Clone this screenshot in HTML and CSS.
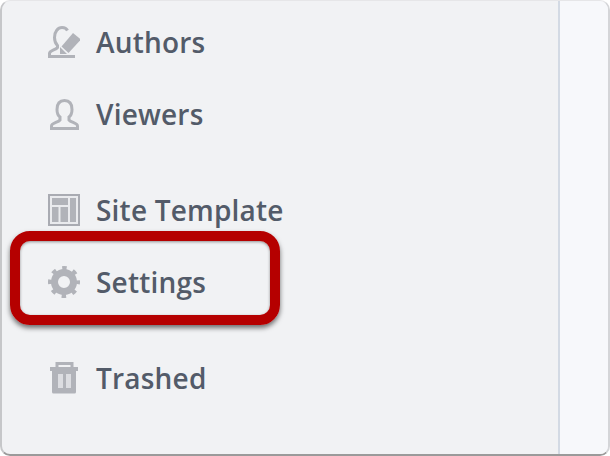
FILE: index.html
```html
<!DOCTYPE html>
<html lang="en">
<head>
    <meta charset="UTF-8">
    <title>Site Settings</title>
    <link rel="stylesheet" href="styles.css">
</head>
<body>
    <div class="window">
        <nav class="sidebar">
            <ul class="menu">
                <li class="menu-item">
                    <svg class="icon" viewBox="0 0 32 32"><path d="M0 30.500h27M1.500 30v-2.500c0-3 6-3.500 8-6v-2c-2-2-3-5-3-8C6.500 5.500 10 1.500 14 1.500c2.500 0 4.500 1 5.500 3" fill="none" stroke="#b1b3b9" stroke-width="3"/><path d="M13.500 20.500L25 7l8 6.500L20.500 27z" fill="#b1b3b9"/><path d="M12 21v7h7z" fill="#b1b3b9"/></svg>
                    <span>Authors</span>
                </li>
                <li class="menu-item">
                    <svg class="icon" viewBox="0 0 32 32"><path d="M3.500 30.500V28c0-3 6.500-3.500 8.500-6v-3c-2-1.500-3-4-3-7.500C9 6 11.500 2.500 16.500 2.500S24 6 24 11.500c0 3.500-1 6-3 7.500v3c2 2.500 8.500 3 8.500 6v2.500z" fill="none" stroke="#b1b3b9" stroke-width="3"/></svg>
                    <span>Viewers</span>
                </li>
                <li class="menu-item group-start">
                    <svg class="icon" viewBox="0 0 32 32"><path d="M0 0h32v32H0z" fill="#eaebee"/><path fill-rule="evenodd" d="M0 0h32v32H0zM2 2v28h28V2z" fill="#a9abb2"/><path d="M4 4h16v7H4zM4 13h6.500v15H4zM12.500 13H20v15h-7.500zM22 4h6v24h-6z" fill="#b1b3b9"/></svg>
                    <span>Site Template</span>
                </li>
                <li class="menu-item">
                    <svg class="icon" viewBox="0 0 32 32"><circle cx="16" cy="16" r="9.500" fill="none" stroke="#b1b3b9" stroke-width="7"/><circle cx="16" cy="16" r="14" fill="none" stroke="#b1b3b9" stroke-width="4" stroke-dasharray="4.500 6.496" stroke-dashoffset="2.250"/></svg>
                    <span>Settings</span>
                    <div class="highlight"></div>
                </li>
                <li class="menu-item group-start">
                    <svg class="icon" viewBox="0 0 32 32"><path d="M9 6V1.500h15V6" fill="none" stroke="#b1b3b9" stroke-width="3"/><path d="M2 5h28v4H2z" fill="#b1b3b9"/><path d="M4 9h24v21a1.500 1.500 0 0 1-1.500 1.500h-21A1.500 1.500 0 0 1 4 30z" fill="#b1b3b9"/><path d="M10 12h5v14h-5zM18 12h5v14h-5z" fill="#dcdde1"/></svg>
                    <span>Trashed</span>
                </li>
            </ul>
        </nav>
        <div class="content"></div>
    </div>
</body>
</html>
```

FILE: styles.css
```css
html, body {
    height: 100%;
}
body {
    margin: 0;
    background-color: #fff;
    font-family: "Open Sans", sans-serif;
}
.window {
    display: flex;
    box-sizing: border-box;
    height: 456px;
    background-color: #f1f2f4;
    border-left: 2px solid #c6c7c9;
    border-bottom: 2px solid #9a9a9a;
    border-top: 1px solid #e6e6e8;
    border-right: 2px solid #d4d5d8;
    border-radius: 10px;
    overflow: hidden;
}
.sidebar {
    width: 556px;
    border-right: 2px solid #d3dae4;
}
.content {
    flex: 1;
    background-color: #f7f8fb;
}
.menu {
    list-style: none;
    margin: 0;
    padding: 5px 0 0 46px;
}
.menu-item {
    position: relative;
    display: flex;
    align-items: center;
    gap: 16px;
    height: 72px;
    font-size: 28px;
    font-weight: 600;
    letter-spacing: 0.2px;
    color: #535b69;
}
.group-start {
    margin-top: 24px;
}
.icon {
    width: 32px;
    height: 32px;
    flex-shrink: 0;
}
.highlight {
    position: absolute;
    left: -38px;
    top: -15px;
    width: 270px;
    height: 94px;
    box-sizing: border-box;
    border: 10px solid #b50000;
    border-radius: 20px;
    box-shadow: 0 3px 5px rgba(0, 0, 0, 0.55), inset 0 1px 3px rgba(0, 0, 0, 0.4);
}
```
